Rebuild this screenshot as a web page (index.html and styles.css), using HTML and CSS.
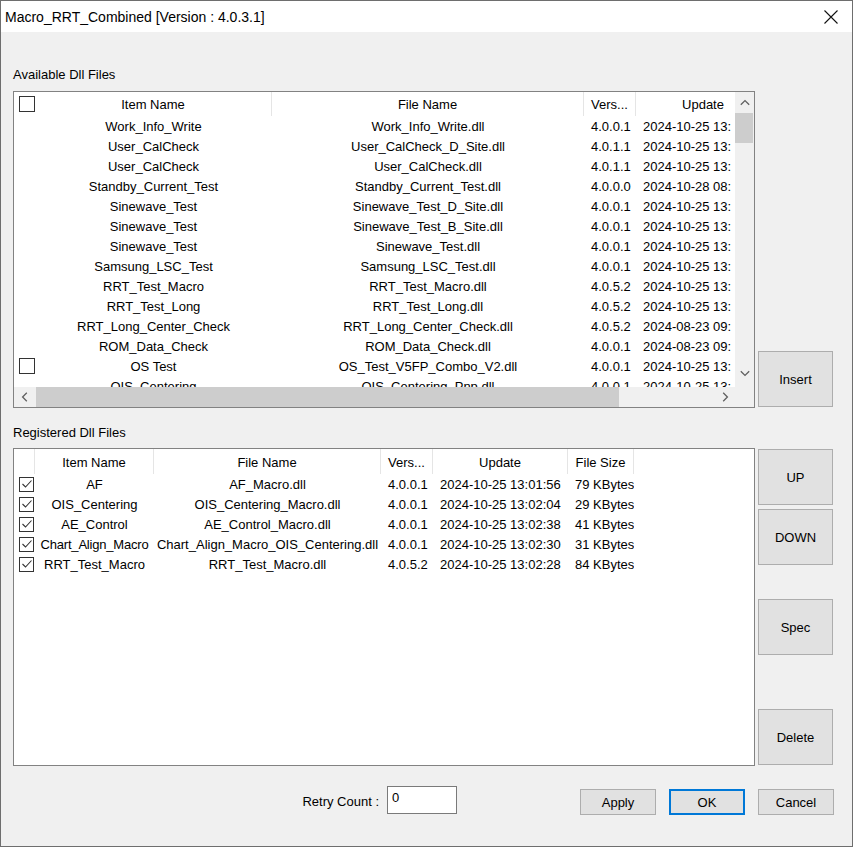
FILE: index.html
```html
<!DOCTYPE html>
<html>
<head>
<meta charset="utf-8">
<title>Macro_RRT_Combined</title>
<link rel="stylesheet" href="styles.css">
</head>
<body>
<div class="window">
  <div class="titlebar">
    <span class="title">Macro_RRT_Combined [Version : 4.0.3.1]</span>
    <svg class="close" width="14" height="14" viewBox="0 0 14 14"><path d="M0.5 0.5 L13.5 13.5 M13.5 0.5 L0.5 13.5" stroke="#111" stroke-width="1.1" fill="none"/></svg>
  </div>
  <div class="content">
    <div class="label">Available Dll Files</div>
    <div class="section">
      <div class="list list1">
        <div class="viewport">
          <div class="hdr grid1">
            <div class="hc c-item"><span class="cbslot"><span class="cb"></span></span><span class="ctext">Item Name</span></div>
            <div class="hc">File Name</div>
            <div class="hc">Vers...</div>
            <div class="hc">Update</div>
          </div>
          <div class="row grid1"><div class="c-item"><span class="cbslot"></span><span class="ctext">Work_Info_Write</span></div><div class="cc">Work_Info_Write.dll</div><div class="cl">4.0.0.1</div><div class="cl">2024-10-25 13:</div></div>
          <div class="row grid1"><div class="c-item"><span class="cbslot"></span><span class="ctext">User_CalCheck</span></div><div class="cc">User_CalCheck_D_Site.dll</div><div class="cl">4.0.1.1</div><div class="cl">2024-10-25 13:</div></div>
          <div class="row grid1"><div class="c-item"><span class="cbslot"></span><span class="ctext">User_CalCheck</span></div><div class="cc">User_CalCheck.dll</div><div class="cl">4.0.1.1</div><div class="cl">2024-10-25 13:</div></div>
          <div class="row grid1"><div class="c-item"><span class="cbslot"></span><span class="ctext">Standby_Current_Test</span></div><div class="cc">Standby_Current_Test.dll</div><div class="cl">4.0.0.0</div><div class="cl">2024-10-28 08:</div></div>
          <div class="row grid1"><div class="c-item"><span class="cbslot"></span><span class="ctext">Sinewave_Test</span></div><div class="cc">Sinewave_Test_D_Site.dll</div><div class="cl">4.0.0.1</div><div class="cl">2024-10-25 13:</div></div>
          <div class="row grid1"><div class="c-item"><span class="cbslot"></span><span class="ctext">Sinewave_Test</span></div><div class="cc">Sinewave_Test_B_Site.dll</div><div class="cl">4.0.0.1</div><div class="cl">2024-10-25 13:</div></div>
          <div class="row grid1"><div class="c-item"><span class="cbslot"></span><span class="ctext">Sinewave_Test</span></div><div class="cc">Sinewave_Test.dll</div><div class="cl">4.0.0.1</div><div class="cl">2024-10-25 13:</div></div>
          <div class="row grid1"><div class="c-item"><span class="cbslot"></span><span class="ctext">Samsung_LSC_Test</span></div><div class="cc">Samsung_LSC_Test.dll</div><div class="cl">4.0.0.1</div><div class="cl">2024-10-25 13:</div></div>
          <div class="row grid1"><div class="c-item"><span class="cbslot"></span><span class="ctext">RRT_Test_Macro</span></div><div class="cc">RRT_Test_Macro.dll</div><div class="cl">4.0.5.2</div><div class="cl">2024-10-25 13:</div></div>
          <div class="row grid1"><div class="c-item"><span class="cbslot"></span><span class="ctext">RRT_Test_Long</span></div><div class="cc">RRT_Test_Long.dll</div><div class="cl">4.0.5.2</div><div class="cl">2024-10-25 13:</div></div>
          <div class="row grid1"><div class="c-item"><span class="cbslot"></span><span class="ctext">RRT_Long_Center_Check</span></div><div class="cc">RRT_Long_Center_Check.dll</div><div class="cl">4.0.5.2</div><div class="cl">2024-08-23 09:</div></div>
          <div class="row grid1"><div class="c-item"><span class="cbslot"></span><span class="ctext">ROM_Data_Check</span></div><div class="cc">ROM_Data_Check.dll</div><div class="cl">4.0.0.1</div><div class="cl">2024-08-23 09:</div></div>
          <div class="row grid1"><div class="c-item"><span class="cbslot"><span class="cb"></span></span><span class="ctext">OS Test</span></div><div class="cc">OS_Test_V5FP_Combo_V2.dll</div><div class="cl">4.0.0.1</div><div class="cl">2024-10-25 13:</div></div>
          <div class="row grid1"><div class="c-item"><span class="cbslot"></span><span class="ctext">OIS_Centering</span></div><div class="cc">OIS_Centering_Pnp.dll</div><div class="cl">4.0.0.1</div><div class="cl">2024-10-25 13:</div></div>
        </div>
        <div class="vscroll">
          <div class="sbtn sbtn-v"><svg width="10" height="7" viewBox="0 0 10 7"><polyline points="0.8,5.8 5,1.6 9.2,5.8" fill="none" stroke="#606060" stroke-width="1.3"/></svg></div>
          <div class="vthumb"></div>
          <div class="vtrack"></div>
          <div class="sbtn sbtn-v sbtn-down"><svg width="10" height="7" viewBox="0 0 10 7"><polyline points="0.8,1.2 5,5.4 9.2,1.2" fill="none" stroke="#606060" stroke-width="1.3"/></svg></div>
        </div>
        <div class="hscroll">
          <div class="sbtn sbtn-h"><svg width="7" height="10" viewBox="0 0 7 10"><polyline points="5.8,0.8 1.6,5 5.8,9.2" fill="none" stroke="#606060" stroke-width="1.3"/></svg></div>
          <div class="hthumb"></div>
          <div class="htrack"></div>
          <div class="sbtn sbtn-h"><svg width="7" height="10" viewBox="0 0 7 10"><polyline points="1.2,0.8 5.4,5 1.2,9.2" fill="none" stroke="#606060" stroke-width="1.3"/></svg></div>
        </div>
        <div class="corner"></div>
      </div>
      <div class="btncol btncol1">
        <button class="btn">Insert</button>
      </div>
    </div>

    <div class="label label2">Registered Dll Files</div>
    <div class="section">
      <div class="list list2">
        <div class="hdr2 grid2">
          <div class="hc"></div>
          <div class="hc">Item Name</div>
          <div class="hc">File Name</div>
          <div class="hc">Vers...</div>
          <div class="hc">Update</div>
          <div class="hc">File Size</div>
        </div>
        <div class="row grid2"><div class="cbcell"><span class="cb checked"><svg width="12" height="10" viewBox="0 0 12 10"><polyline points="1.5,5 4.5,8 10.5,1.5" fill="none" stroke="#333" stroke-width="1.1"/></svg></span></div><div class="cc">AF</div><div class="cc">AF_Macro.dll</div><div class="cl">4.0.0.1</div><div class="cl">2024-10-25 13:01:56</div><div class="cl">79 KBytes</div></div>
        <div class="row grid2"><div class="cbcell"><span class="cb checked"><svg width="12" height="10" viewBox="0 0 12 10"><polyline points="1.5,5 4.5,8 10.5,1.5" fill="none" stroke="#333" stroke-width="1.1"/></svg></span></div><div class="cc">OIS_Centering</div><div class="cc">OIS_Centering_Macro.dll</div><div class="cl">4.0.0.1</div><div class="cl">2024-10-25 13:02:04</div><div class="cl">29 KBytes</div></div>
        <div class="row grid2"><div class="cbcell"><span class="cb checked"><svg width="12" height="10" viewBox="0 0 12 10"><polyline points="1.5,5 4.5,8 10.5,1.5" fill="none" stroke="#333" stroke-width="1.1"/></svg></span></div><div class="cc">AE_Control</div><div class="cc">AE_Control_Macro.dll</div><div class="cl">4.0.0.1</div><div class="cl">2024-10-25 13:02:38</div><div class="cl">41 KBytes</div></div>
        <div class="row grid2"><div class="cbcell"><span class="cb checked"><svg width="12" height="10" viewBox="0 0 12 10"><polyline points="1.5,5 4.5,8 10.5,1.5" fill="none" stroke="#333" stroke-width="1.1"/></svg></span></div><div class="cc cc-tight">Chart_Align_Macro</div><div class="cc">Chart_Align_Macro_OIS_Centering.dll</div><div class="cl">4.0.0.1</div><div class="cl">2024-10-25 13:02:30</div><div class="cl">31 KBytes</div></div>
        <div class="row grid2"><div class="cbcell"><span class="cb checked"><svg width="12" height="10" viewBox="0 0 12 10"><polyline points="1.5,5 4.5,8 10.5,1.5" fill="none" stroke="#333" stroke-width="1.1"/></svg></span></div><div class="cc">RRT_Test_Macro</div><div class="cc">RRT_Test_Macro.dll</div><div class="cl">4.0.5.2</div><div class="cl">2024-10-25 13:02:28</div><div class="cl">84 KBytes</div></div>
      </div>
      <div class="btncol btncol2">
        <button class="btn">UP</button>
        <button class="btn btn-down">DOWN</button>
        <button class="btn btn-spec">Spec</button>
        <button class="btn btn-delete">Delete</button>
      </div>
    </div>

    <div class="footer">
      <div class="retry">
        <span class="retry-label">Retry Count :</span>
        <div class="input">0</div>
      </div>
      <div class="actions">
        <button class="btn btn-sm">Apply</button>
        <button class="btn btn-sm btn-default">OK</button>
        <button class="btn btn-sm">Cancel</button>
      </div>
    </div>
  </div>
</div>
</body>
</html>
```

FILE: styles.css
```css
* { box-sizing: border-box; }
html, body { margin: 0; padding: 0; background: #f0f0f0; }
body { font-family: "Liberation Sans", Arial, sans-serif; font-size: 13px; color: #000; }

.window {
  width: 853px;
  height: 847px;
  border: 1px solid #6e6e6e;
  background: #f0f0f0;
  display: flex;
  flex-direction: column;
}

.titlebar {
  height: 31px;
  background: #fff;
  display: flex;
  align-items: center;
  justify-content: space-between;
  padding: 0 14px 0 4px;
}
.title { font-size: 14px; line-height: 16px; margin-top: 1px; }
.close { display: block; }

.content {
  flex: 1;
  padding: 35px 18px 0 12px;
  display: flex;
  flex-direction: column;
}

.label { line-height: 16px; height: 16px; margin-bottom: 8px; }
.label2 { margin-top: 17px; margin-bottom: 7px; }

.section { display: flex; gap: 3px; }

.list {
  width: 742px;
  background: #fff;
  border: 1px solid #828282;
}

.list1 {
  height: 317px;
  display: grid;
  grid-template-columns: 721px 19px;
  grid-template-rows: 295px 20px;
}
.viewport { overflow: hidden; }

.list2 { height: 318px; }

.grid1 { display: grid; grid-template-columns: 258px 312px 52px 135px; width: 757px; }
.grid2 { display: grid; grid-template-columns: 21px 119px 227px 52px 135px 66px; }

.hdr { height: 24px; }
.hdr2 { height: 25px; }
.hdr .hc, .hdr2 .hc {
  border-right: 1px solid #e5e5e5;
  text-align: center;
  white-space: nowrap;
  overflow: hidden;
  padding-top: 1px;
}
.hdr .hc { line-height: 23px; }
.hdr2 .hc { line-height: 23px; padding-top: 2px; }
.hdr .c-item { padding-top: 0; }
.hdr .c-item .ctext { padding-top: 1px; }

.row { height: 20px; line-height: 20px; }
.row > div { white-space: nowrap; overflow: hidden; padding-top: 1px; }
.row > .c-item, .row > .cbcell { padding-top: 0; }
.row .ctext { padding-top: 1px; line-height: 20px; }

.c-item { display: flex; align-items: center; }
.cbslot { width: 21px; flex: none; display: flex; align-items: center; height: 20px; }
.hdr .cbslot { height: 24px; }
.ctext { flex: 1; text-align: center; white-space: nowrap; overflow: hidden; }
.cc { text-align: center; }
.cc-tight { letter-spacing: -0.2px; }
.cl { padding-left: 7px; }

.cb {
  display: inline-flex;
  align-items: center;
  justify-content: center;
  width: 16px;
  height: 16px;
  margin-left: 5px;
  border: 1px solid #333;
  background: #fff;
}
.cbcell { display: flex; align-items: center; }
.cbcell .cb { width: 15px; height: 15px; }

.vscroll {
  background: #f0f0f0;
  display: flex;
  flex-direction: column;
}
.sbtn { display: flex; align-items: center; justify-content: center; flex: none; }
.sbtn svg { display: block; }
.sbtn-v { height: 20px; }
.sbtn-down { margin-bottom: 4px; }
.vthumb { height: 30px; margin: 1px 1px 0 0; background: #cdcdcd; flex: none; }
.vtrack { flex: 1; }

.hscroll {
  background: #f0f0f0;
  display: flex;
}
.sbtn-h { width: 20px; }
.hthumb { width: 583px; margin-left: 2px; background: #cdcdcd; flex: none; }
.htrack { flex: 1; }
.corner { background: #f0f0f0; }

.btncol { width: 75px; display: flex; flex-direction: column; }
.btncol1 { justify-content: flex-end; padding-bottom: 1px; }
.btncol2 { padding-top: 1px; }

.btn {
  font-family: "Liberation Sans", Arial, sans-serif;
  font-size: 13px;
  color: #000;
  background: #e1e1e1;
  border: 1px solid #adadad;
  width: 75px;
  height: 56px;
  padding: 0;
  margin: 0;
}
.btn-down { margin-top: 4px; }
.btn-spec { margin-top: 34px; }
.btn-delete { margin-top: 54px; }

.footer {
  margin-top: 20px;
  display: flex;
  justify-content: flex-end;
  align-items: flex-start;
}
.retry { display: flex; align-items: center; gap: 8px; margin-right: 123px; }
.retry-label { padding-top: 2px; }
.input {
  width: 70px;
  height: 28px;
  background: #fff;
  border: 1px solid #7a7a7a;
  padding: 3px 0 0 4px;
  line-height: 16px;
}
.actions { display: flex; gap: 13px; margin-top: 3px; }
.btn-sm { width: 76px; height: 26px; }
.btn-default { border: 2px solid #0078d7; }
```
